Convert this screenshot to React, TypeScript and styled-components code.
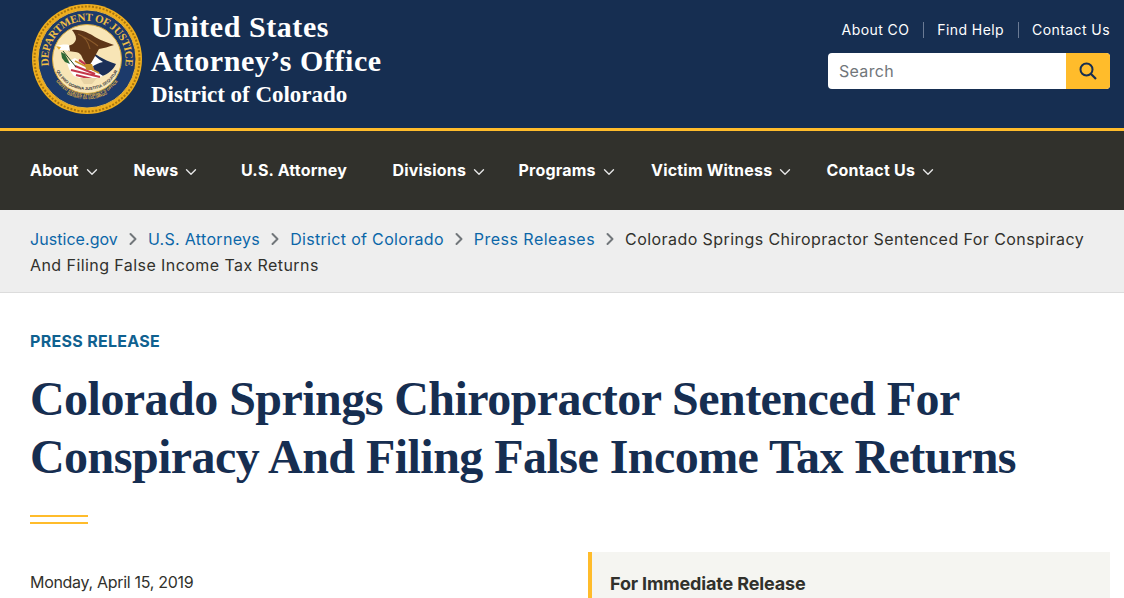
import React from "react";
import styled, { createGlobalStyle } from "styled-components";
import { ChevronDown, ChevronRight } from "lucide-react";

const Global = createGlobalStyle`
  html, body { margin: 0; padding: 0; height: 598px; overflow: hidden; background: #fff; }
  * { box-sizing: border-box; }
  body { font-family: Inter, "Liberation Sans", sans-serif; color: #31312c; }
`;

const Top = styled.header`
  height: 131px;
  background: #162e51;
  border-bottom: 3px solid #ffbc2b;
  display: flex;
  justify-content: space-between;
  padding: 4px 14px 0 32px;
`;
const Brand = styled.div`
  display: flex;
  gap: 9px;
  align-items: flex-start;
`;
const BrandText = styled.div`
  font-family: "Liberation Serif", serif;
  font-weight: 700;
  color: #fff;
  padding-top: 6px;
`;
const BrandLine = styled.div<{ $small?: boolean }>`
  font-size: ${(p) => (p.$small ? "23px" : "30px")};
  line-height: ${(p) => (p.$small ? "33px" : "34px")};
  letter-spacing: ${(p) => (p.$small ? "-0.03px" : "0.55px")};
`;
const Utility = styled.div`
  display: flex;
  flex-direction: column;
  align-items: flex-end;
  padding-top: 18px;
`;
const UtilLinks = styled.nav`
  display: flex;
  color: #fff;
  font-size: 14px;
  line-height: 16px;
  letter-spacing: 0.42px;
`;
const UtilLink = styled.a`
  padding: 0 14px 0 13px;
  border-left: 1px solid #6a7a94;
  &:first-child { border-left: 0; }
  &:last-child { padding-right: 0; }
`;
const SearchBox = styled.div`
  display: flex;
  width: 282px;
  height: 36px;
  margin-top: 15px;
  border-radius: 4px;
  overflow: hidden;
  background: #fff;
`;
const SearchText = styled.div`
  flex: 1;
  padding-left: 11px;
  font-size: 16px;
  line-height: 36px;
  letter-spacing: 0.3px;
  color: #71767a;
`;
const SearchButton = styled.div`
  width: 44px;
  background: #ffbc2b;
  color: #162e51;
  display: flex;
  align-items: center;
  justify-content: center;
`;
const Nav = styled.nav`
  height: 79px;
  background: #31312c;
  display: flex;
  align-items: center;
  padding: 0 0 2px 30px;
  color: #fff;
  font-size: 16px;
  font-weight: 700;
  letter-spacing: 0.2px;
`;
const NavItem = styled.a<{ $w: number }>`
  width: ${(p) => p.$w}px;
  display: flex;
  align-items: center;
  gap: 4px;
  white-space: nowrap;
`;
const NavChevron = styled(ChevronDown)`
  margin-top: 4px;
  color: #e6e6e6;
`;
const Crumbs = styled.nav`
  height: 83px;
  background: #eeeeee;
  border-bottom: 1px solid #dcdcdc;
  padding: 16px 30px 0;
  font-size: 16px;
  line-height: 26px;
  letter-spacing: 0.43px;
  color: #31312c;
`;
const Crumb = styled.a`
  color: #0b66a8;
  letter-spacing: 0.32px;
  &:first-of-type { letter-spacing: 0.05px; }
  &:nth-of-type(4) { letter-spacing: 0.47px; }
`;
const Sep = styled(ChevronRight)`
  display: inline-block;
  vertical-align: -4px;
  margin: 0 5px;
  color: #71767a;
`;
const Main = styled.main`
  padding: 37px 14px 0 30px;
`;
const Eyebrow = styled.div`
  font-size: 16px;
  line-height: 22px;
  font-weight: 700;
  letter-spacing: 0.3px;
  color: #0f6190;
`;
const Title = styled.h1`
  margin: 18px 0 0;
  font-family: "Liberation Serif", serif;
  font-size: 48px;
  line-height: 58px;
  font-weight: 700;
  color: #162e51;
  letter-spacing: -0.54px;
`;
const Rule = styled.div`
  width: 58px;
  height: 9px;
  margin-top: 29px;
  border-top: 2px solid #ffbc2b;
  border-bottom: 2px solid #ffbc2b;
`;
const Columns = styled.div`
  display: flex;
  margin-top: 28px;
`;
const DateCol = styled.div`
  width: 558px;
  padding-top: 20px;
  font-size: 16px;
  line-height: 20px;
  letter-spacing: -0.3px;
`;
const Release = styled.aside`
  flex: 1;
  height: 120px;
  background: #f5f5f1;
  border-left: 4px solid #ffbc2b;
  padding: 21px 18px;
  font-size: 18px;
  line-height: 22px;
  font-weight: 700;
  letter-spacing: -0.15px;
`;

const MagnifierIcon = () => (
  <svg width="18" height="18" viewBox="0 0 18 18" fill="none" stroke="currentColor" strokeWidth="2" aria-hidden="true">
    <circle cx="7.5" cy="7.5" r="6" />
    <path d="M11.8 11.8 L17 17" strokeWidth="2.2" />
  </svg>
);

const Seal = () => (
  <svg width="110" height="110" viewBox="0 0 110 110" role="img" aria-label="Department of Justice seal">
    <circle cx="55" cy="55" r="55" fill="#efae1d" />
    <circle cx="55" cy="55" r="52.5" fill="none" stroke="#a9760f" strokeWidth="2" strokeDasharray="2 1.6" />
    <circle cx="55" cy="55" r="49" fill="#1c3a6b" stroke="#e9b43c" strokeWidth="1" />
    <circle cx="55" cy="55" r="34.5" fill="#f8e5b6" stroke="#d8a93a" strokeWidth="1" />
    <defs>
      <path id="sealTop" d="M 17.5 64 A 38.5 38.5 0 1 1 92.5 64" />
      <path id="sealOffice" d="M 19 68 A 38.5 38.5 0 0 0 91 68" />
      <path id="sealDistrict" d="M 24 82 A 43 43 0 0 0 86 82" />
      <path id="sealMotto" d="M 23 58 A 32 28 0 0 0 87 58" />
    </defs>
    <text fontFamily="'Liberation Serif', serif" fontSize="11" fontWeight="700" fill="#eebd45">
      <textPath href="#sealTop" startOffset="50%" textAnchor="middle" textLength="134">DEPARTMENT OF JUSTICE</textPath>
    </text>
    <text fontFamily="'Liberation Sans', sans-serif" fontSize="3.9" fontWeight="700" fill="#eebd45">
      <textPath href="#sealOffice" startOffset="50%" textAnchor="middle">UNITED STATES ATTORNEY'S OFFICE</textPath>
    </text>
    <text fontFamily="'Liberation Sans', sans-serif" fontSize="3.4" fontWeight="700" fill="#eebd45">
      <textPath href="#sealDistrict" startOffset="50%" textAnchor="middle">DISTRICT OF COLORADO</textPath>
    </text>
    <path d="M57 46 C63 49 70 56 84 60 C81 66 76 70 70 72 L62 66 Z" fill="#1b2f57" />
    <path d="M57 46 C61 50 66 55 71 58 C67 59 63 60 59 64 L56 56 Z" fill="#fff" />
    <path d="M35 58 L43 54 L62 66 L71 72 C62 76 50 76 42 72 C38 68 36 63 35 58 Z" fill="#fff" />
    <path d="M43 62 L63 70 M39 66 L68 73 M44 71 L60 75 M47 56 L62 66" stroke="#c4374a" strokeWidth="2.2" fill="none" />
    <path d="M29 48 L33 50 L38 60 L33 58 L30 54 Z" fill="#2f6a35" />
    <path d="M31 47 L44 63" stroke="#1f4c26" strokeWidth="1" />
    <path d="M40 26 C50 25 58 30 63 33 C70 37 77 39 82 41 C76 43 72 44 67 45 C63 52 60 58 57 62 C53 60 51 55 49 51 C46 47 41 48 36 47 L36 42 C40 41 43 39 44 35 C44 31 42 29 40 26 Z" fill="#5d3517" />
    <path d="M46 30 C52 32 56 37 58 45 M52 33 C58 36 62 39 66 42" stroke="#8a5a2b" strokeWidth="1.2" fill="none" />
    <path d="M24 42 C28 41 33 40 37 41 L38 47 L31 46 L27 46 Z" fill="#fff" />
    <path d="M24 42 L29 43 L27 46 Z" fill="#e3a92c" />
    <path d="M43 57 L67 69" stroke="#c9932a" strokeWidth="1.6" />
    <path d="M53 60 L60 60 L62 66 L54 66 Z" fill="#c9932a" />
    <path d="M48 74 L65 74 L60 80 L52 80 Z" fill="#e8d3a4" />
    <text fontFamily="'Liberation Sans', sans-serif" fontSize="4.1" fontWeight="700" fill="#34343a">
      <textPath href="#sealMotto" startOffset="50%" textAnchor="middle">QUI PRO DOMINA JUSTITIA SEQUITUR</textPath>
    </text>
  </svg>
);

const navItems: [string, number, boolean][] = [
  ["About", 103.5, true],
  ["News", 107.5, true],
  ["U.S. Attorney", 151.5, false],
  ["Divisions", 126, true],
  ["Programs", 132.5, true],
  ["Victim Witness", 175.5, true],
  ["Contact Us", 120, true],
];

const crumbs = ["Justice.gov", "U.S. Attorneys", "District of Colorado", "Press Releases"];

export default function App() {
  return (
    <>
      <Global />
      <Top>
        <Brand>
          <Seal />
          <BrandText>
            <BrandLine>United States</BrandLine>
            <BrandLine>Attorney’s Office</BrandLine>
            <BrandLine $small>District of Colorado</BrandLine>
          </BrandText>
        </Brand>
        <Utility>
          <UtilLinks>
            <UtilLink>About CO</UtilLink>
            <UtilLink>Find Help</UtilLink>
            <UtilLink>Contact Us</UtilLink>
          </UtilLinks>
          <SearchBox>
            <SearchText>Search</SearchText>
            <SearchButton>
              <MagnifierIcon />
            </SearchButton>
          </SearchBox>
        </Utility>
      </Top>
      <Nav>
        {navItems.map(([label, w, chev]) => (
          <NavItem key={label} $w={w}>
            {label}
            {chev && <NavChevron size={18} strokeWidth={1.8} />}
          </NavItem>
        ))}
      </Nav>
      <Crumbs>
        {crumbs.map((c) => (
          <React.Fragment key={c}>
            <Crumb>{c}</Crumb>
            <Sep size={20} strokeWidth={2.4} />
          </React.Fragment>
        ))}
        Colorado Springs Chiropractor Sentenced For Conspiracy And Filing False Income Tax Returns
      </Crumbs>
      <Main>
        <Eyebrow>PRESS RELEASE</Eyebrow>
        <Title>
          Colorado Springs Chiropractor Sentenced For
          <br />
          Conspiracy And Filing False Income Tax Returns
        </Title>
        <Rule />
        <Columns>
          <DateCol>Monday, April 15, 2019</DateCol>
          <Release>For Immediate Release</Release>
        </Columns>
      </Main>
    </>
  );
}
